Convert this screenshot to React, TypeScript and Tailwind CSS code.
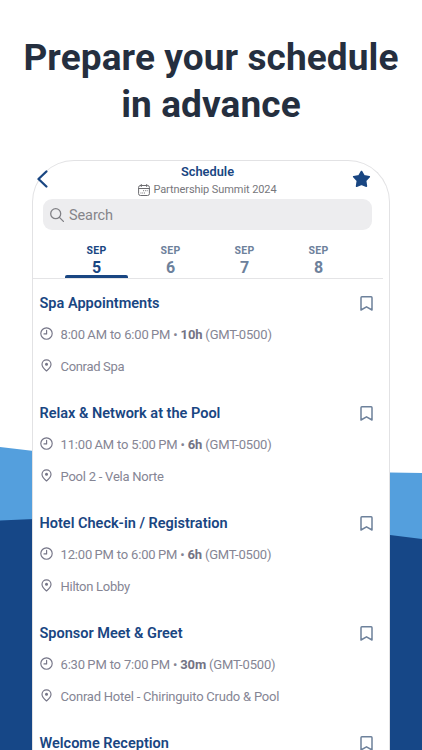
import React from 'react';

type Session = {
  title: string;
  time?: string;
  duration?: string;
  place?: string;
  placeClass?: string;
};

const sessions: Session[] = [
  { title: 'Spa Appointments', time: '8:00\u2009AM to 6:00\u2009PM', duration: '10h', place: 'Conrad Spa', placeClass: 'tracking-[-0.33px]' },
  { title: 'Relax & Network at the Pool', time: '11:00\u2009AM to 5:00\u2009PM', duration: '6h', place: 'Pool 2 - Vela Norte', placeClass: 'tracking-[-0.23px]' },
  { title: 'Hotel Check-in / Registration', time: '12:00\u2009PM to 6:00\u2009PM', duration: '6h', place: 'Hilton Lobby', placeClass: 'tracking-[-0.28px]' },
  { title: 'Sponsor Meet & Greet', time: '6:30\u2009PM to 7:00\u2009PM', duration: '30m', place: 'Conrad Hotel - Chiringuito Crudo & Pool', placeClass: 'tracking-[-0.22px]' },
  { title: 'Welcome Reception' },
];

const days = ['5', '6', '7', '8'];

function ClockIcon() {
  return (
    <svg className="mt-[-1px] h-[13px] w-[13px] shrink-0" viewBox="0 0 13 13" fill="none" stroke="#757587" strokeWidth="1.15" strokeLinecap="round" strokeLinejoin="round">
      <circle cx="6.5" cy="6.5" r="5.7" />
      <path d="M6.6 3.2v3.7H4" />
    </svg>
  );
}

function PinIcon() {
  return (
    <svg className="mt-[-1px] h-[13px] w-[13px] shrink-0" viewBox="0 0 13 13" fill="none" stroke="#757587" strokeWidth="1.15" strokeLinejoin="round">
      <path d="M6.5 12C4.4 10.3 2 8.2 2 5.3a4.5 4.5 0 0 1 9 0C11 8.2 8.6 10.3 6.5 12Z" />
      <circle cx="6.5" cy="5.2" r="1.5" fill="#757587" stroke="none" />
    </svg>
  );
}

function BookmarkIcon() {
  return (
    <svg className="h-[15px] w-[13px] shrink-0" viewBox="0 0 13 15" fill="none" stroke="#6d819b" strokeWidth="1.5" strokeLinejoin="round">
      <path d="M1 1.7a.9.9 0 0 1 .9-.9h9.2a.9.9 0 0 1 .9.9v12.3l-5.5-3.2L1 14z" />
    </svg>
  );
}

function SessionRow({ s }: { s: Session }) {
  return (
    <li className="h-[110px] pl-[6.5px] pr-4 last:h-6">
      <div className="flex h-5 items-center justify-between">
        <h2 className="whitespace-nowrap pt-[2px] text-[14.5px] font-semibold leading-5 text-[#194682]">{s.title}</h2>
        <BookmarkIcon />
      </div>
      {s.time && (
        <div className="mt-[11px] flex h-5 items-center gap-2 text-[13px] text-[#858594]">
          <ClockIcon />
          <p className="whitespace-nowrap pt-px tracking-[-0.17px]">
            {s.time} • <b className="font-bold text-[#737384]">{s.duration}</b> (GMT-0500)
          </p>
        </div>
      )}
      {s.place && (
        <div className="mt-3 flex h-5 items-center gap-2 text-[13px] text-[#858594]">
          <PinIcon />
          <p className={`whitespace-nowrap pt-px ${s.placeClass}`}>{s.place}</p>
        </div>
      )}
    </li>
  );
}

export default function App() {
  return (
    <div className="relative isolate h-[750px] w-full overflow-hidden bg-white font-[Roboto,sans-serif]">
      <svg className="absolute inset-0 -z-10" width="422" height="750" viewBox="0 0 422 750">
        <path d="M0 447 34 451H388L390 472.5 422 473V750H0Z" fill="#549fdd" />
        <path d="M0 520.5 34 519H388L390 535 422 539V750H0Z" fill="#164787" />
      </svg>
      <h1 className="pt-[34px] text-center text-[37px] font-bold leading-[47px] tracking-[0.1px] text-[#252f3f]">
        <span>Prepare your schedule</span>
        <br />
        <span>in advance</span>
      </h1>
      <main className="mx-auto mt-8 h-[590px] w-[358px] rounded-t-[42px] border border-b-0 border-[#e2e2e4] bg-white">
        <header className="flex h-[38px] justify-between pl-1 pr-[18px]">
          <svg className="mt-[9px] h-[18px] w-[11px]" viewBox="0 0 11 18" fill="none" stroke="#194682" strokeWidth="2.3" strokeLinecap="round" strokeLinejoin="round">
            <path d="M9.4 1.5 1.5 9l7.9 7.5" />
          </svg>
          <div className="ml-[15px] flex flex-col items-center pt-[1px]">
            <h2 className="text-[12.8px] font-semibold leading-5 text-[#194682]">Schedule</h2>
            <div className="flex h-4 items-center gap-[3px] text-[11px] text-[#77777c]">
              <svg className="mt-[-1px] h-3 w-3" viewBox="0 0 12 12" fill="none" stroke="#6c6c70" strokeWidth="1" strokeLinecap="round">
                <rect x=".6" y="1.5" width="10.8" height="10" rx="1.8" />
                <path d="M.6 4.5h10.8M3.3.5v2M8.7.5v2" />
                <path d="M5.5 6.7h.1M7.3 6.7h.1M9.1 6.7h.1M2.9 9h.1M4.7 9h.1M6.5 9h.1" />
              </svg>
              <span className="whitespace-nowrap tracking-[-0.08px]">Partnership Summit 2024</span>
            </div>
          </div>
          <svg className="mt-[9px] h-[18px] w-[19px]" viewBox="0 0 19 18" fill="#194682" stroke="#194682" strokeWidth="1.6" strokeLinejoin="round">
            <path d="m9.5 1.5 2.6 4.3 5.2.9-3.7 3.9.8 5.6-4.9-2-4.9 2 .8-5.6-3.7-3.9 5.2-.9z" />
          </svg>
        </header>
        <div className="ml-[10px] flex h-[31px] w-[329px] items-center gap-[5px] rounded-[9px] bg-[#ededef] pl-[7px] text-[14.5px] text-[#85858a]">
          <svg className="h-[14px] w-[14px]" viewBox="0 0 14 14" fill="none" stroke="#808085" strokeWidth="1.3" strokeLinecap="round">
            <circle cx="5.7" cy="5.7" r="5" />
            <path d="m9.4 9.4 4 4" />
          </svg>
          <span className="pt-[3px] leading-5 tracking-[-0.1px]">Search</span>
        </div>
        <nav className="flex h-[49px] w-[350px] border-b border-[#e4e4e6] pl-[26.5px]">
          {days.map((day, i) => (
            <div key={day} className={`flex w-[74px] flex-col items-center pt-[12px] font-bold ${i === 0 ? 'text-[#194682]' : 'text-[#6d819b]'}`}>
              <span className="pt-px text-[10.5px] leading-[15px] tracking-[0.3px]">SEP</span>
              <span className="text-[16px] leading-[20px]">{day}</span>
              {i === 0 && <span className="mt-[-3px] h-[3px] w-[63px] shrink-0 rounded-t-[2px] bg-[#194682]" />}
            </div>
          ))}
        </nav>
        <ul className="pt-[14px]">
          {sessions.map((s) => (
            <SessionRow key={s.title} s={s} />
          ))}
        </ul>
      </main>
    </div>
  );
}
